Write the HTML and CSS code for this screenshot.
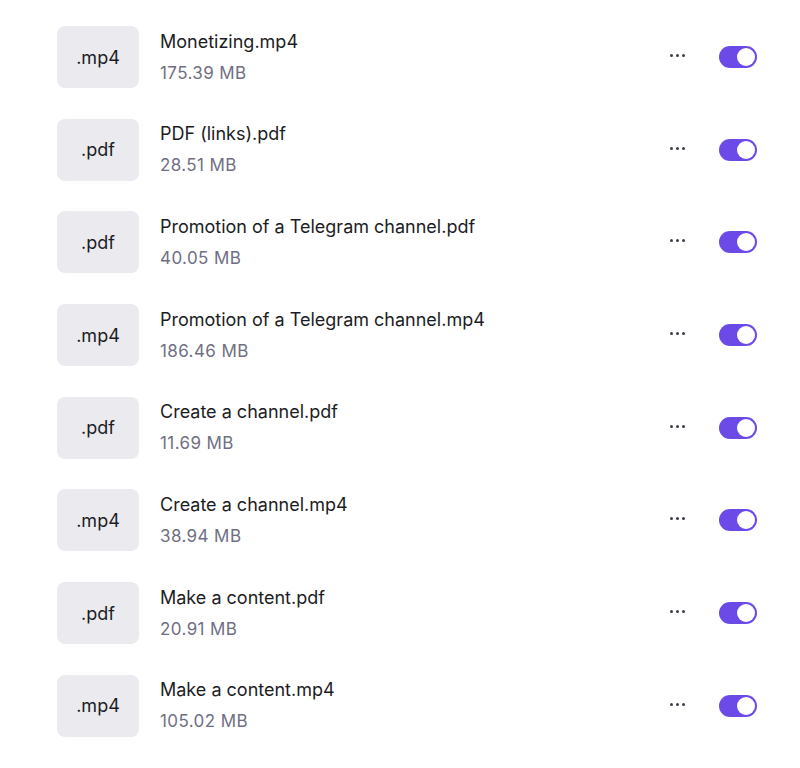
FILE: index.html
```html
<!DOCTYPE html>
<html>
<head>
<meta charset="utf-8">
<link rel="stylesheet" href="styles.css">
</head>
<body>
<ul class="files">
  <li class="file">
    <div class="ext">.mp4</div>
    <div class="info"><div class="name">Monetizing.mp4</div><div class="size">175.39 MB</div></div>
    <button class="more"><span></span><span></span><span></span></button>
    <span class="toggle"><span class="knob"></span></span>
  </li>
  <li class="file">
    <div class="ext">.pdf</div>
    <div class="info"><div class="name">PDF (links).pdf</div><div class="size">28.51 MB</div></div>
    <button class="more"><span></span><span></span><span></span></button>
    <span class="toggle"><span class="knob"></span></span>
  </li>
  <li class="file">
    <div class="ext">.pdf</div>
    <div class="info"><div class="name">Promotion of a Telegram channel.pdf</div><div class="size">40.05 MB</div></div>
    <button class="more"><span></span><span></span><span></span></button>
    <span class="toggle"><span class="knob"></span></span>
  </li>
  <li class="file">
    <div class="ext">.mp4</div>
    <div class="info"><div class="name">Promotion of a Telegram channel.mp4</div><div class="size">186.46 MB</div></div>
    <button class="more"><span></span><span></span><span></span></button>
    <span class="toggle"><span class="knob"></span></span>
  </li>
  <li class="file">
    <div class="ext">.pdf</div>
    <div class="info"><div class="name">Create a channel.pdf</div><div class="size">11.69 MB</div></div>
    <button class="more"><span></span><span></span><span></span></button>
    <span class="toggle"><span class="knob"></span></span>
  </li>
  <li class="file">
    <div class="ext">.mp4</div>
    <div class="info"><div class="name">Create a channel.mp4</div><div class="size">38.94 MB</div></div>
    <button class="more"><span></span><span></span><span></span></button>
    <span class="toggle"><span class="knob"></span></span>
  </li>
  <li class="file">
    <div class="ext">.pdf</div>
    <div class="info"><div class="name">Make a content.pdf</div><div class="size">20.91 MB</div></div>
    <button class="more"><span></span><span></span><span></span></button>
    <span class="toggle"><span class="knob"></span></span>
  </li>
  <li class="file">
    <div class="ext">.mp4</div>
    <div class="info"><div class="name">Make a content.mp4</div><div class="size">105.02 MB</div></div>
    <button class="more"><span></span><span></span><span></span></button>
    <span class="toggle"><span class="knob"></span></span>
  </li>
</ul>
</body>
</html>
```
FILE: styles.css
```css
html, body {
  margin: 0;
  padding: 0;
  background: #ffffff;
}
body {
  font-family: Inter, "Noto Sans", sans-serif;
  color: #1c1c24;
}
.files {
  list-style: none;
  margin: 0;
  padding: 26px 43px 0 57px;
  display: flex;
  flex-direction: column;
  gap: 30.7px;
}
.file {
  display: flex;
  align-items: center;
  height: 62px;
}
.ext {
  width: 82px;
  height: 62px;
  border-radius: 8px;
  background: #ebeaef;
  display: flex;
  align-items: center;
  justify-content: center;
  font-size: 18px;
  font-weight: 400;
  color: #1c1c24;
  flex-shrink: 0;
}
.info {
  flex: 1;
  margin-left: 21px;
  display: flex;
  flex-direction: column;
  gap: 4px;
}
.name {
  font-size: 18px;
  line-height: 26px;
  font-weight: 400;
  color: #1c1c24;
}
.size {
  font-size: 17px;
  line-height: 26px;
  letter-spacing: 0.4px;
  color: #6f6f84;
  margin-top: 1px;
}
.more {
  border: 0;
  background: none;
  padding: 0;
  display: flex;
  gap: 3px;
  align-items: center;
  margin-right: 34px;
  margin-bottom: 3px;
}
.more span {
  width: 3px;
  height: 3px;
  border-radius: 50%;
  background: #3c3c46;
}
.toggle {
  width: 38px;
  height: 22px;
  border-radius: 11px;
  background: #6c4ae8;
  display: flex;
  align-items: center;
  justify-content: flex-end;
  padding: 0 2px;
  box-sizing: border-box;
  flex-shrink: 0;
}
.knob {
  width: 18px;
  height: 18px;
  border-radius: 50%;
  background: #ffffff;
}
```
